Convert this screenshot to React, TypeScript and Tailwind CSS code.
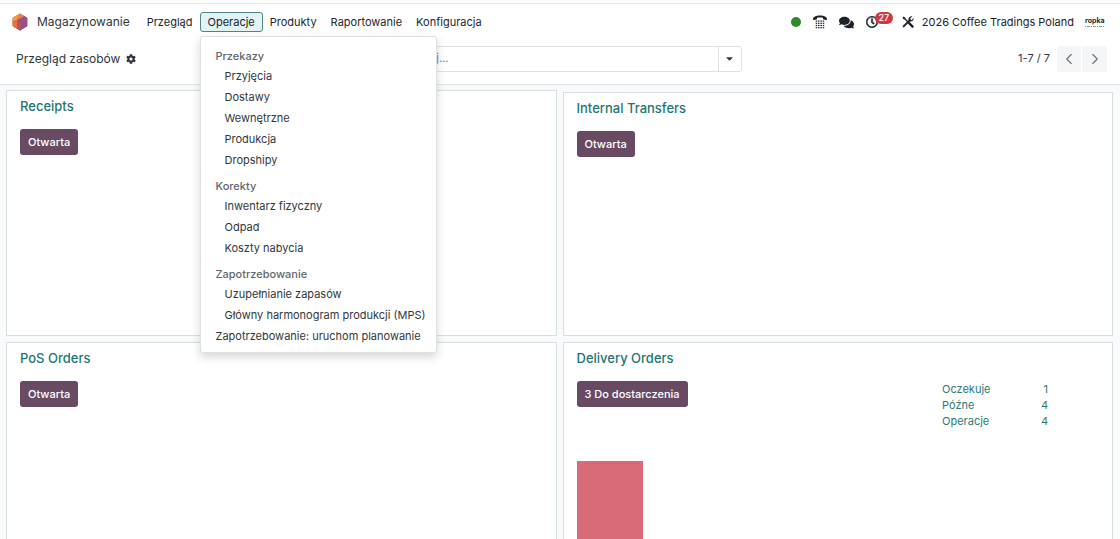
import React from "react";
import { FaCog, FaComments, FaRegClock, FaCaretDown, FaSearch } from "react-icons/fa";
import { ChevronLeft, ChevronRight } from "lucide-react";

type Section = { title: string; items: string[] };

const sections: Section[] = [
  { title: "Przekazy", items: ["Przyjęcia", "Dostawy", "Wewnętrzne", "Produkcja", "Dropshipy"] },
  { title: "Korekty", items: ["Inwentarz fizyczny", "Odpad", "Koszty nabycia"] },
  { title: "Zapotrzebowanie", items: ["Uzupełnianie zapasów", "Główny harmonogram produkcji (MPS)"] },
];

function AppLogo() {
  return (
    <svg viewBox="0 0 16 18" className="h-[18px] w-4" aria-hidden="true">
      <path d="M8 1 15 5v8l-7 4.200L1 13V5z" fill="#985184" stroke="#985184" strokeLinejoin="round" />
      <path d="M8 1 1 5v8l4 2.300V7.500L11.500 3z" fill="#f2a040" stroke="#f2a040" strokeLinejoin="round" />
      <path d="M5 6.500 12 3l3 2v8l-7 4.200-3-1.900z" fill="#985184" />
      <path d="M1 8v5l4 2.400V6.500z" fill="#e8703f" />
      <path d="M5 6.500 8 8.300v8.900l-3-1.800z" fill="#c4504f" />
      <path d="M8 1 12 3.200 5 7V5z" fill="#e97f3c" />
    </svg>
  );
}

function PhoneIcon() {
  return (
    <svg viewBox="0 0 14 14" className="h-[14px] w-[14px]" fill="currentColor" aria-hidden="true">
      <path d="M0 4.300C0 1.800 3.200.6 7 .6s7 1.200 7 3.700c0 .6-.3.8-.8.700l-2.500-.5c-.5-.1-.7-.4-.7-.8V2.800C8.200 2.300 5.800 2.300 4 2.800v.9c0 .4-.2.7-.7.800L.8 5C.3 5.100 0 4.900 0 4.300z" />
      {[5.500, 7.700, 9.900, 12.100].map((y) =>
        [2.700, 5, 7.400, 9.700].map((x) => <rect key={`${x}-${y}`} x={x} y={y} width="1.500" height="1.200" />),
      )}
    </svg>
  );
}

function ToolsIcon() {
  return (
    <svg viewBox="0 0 14 14" className="h-3 w-3" fill="none" stroke="currentColor" aria-hidden="true">
      <path d="M1.800 1.800 7 7" strokeWidth="1.400" />
      <path d="M.6 1.700 1.700.6l2.200 1.300.2 1-1.200 1.200-1-.2z" fill="currentColor" stroke="none" />
      <path d="m8.300 8.300 4 4" strokeWidth="2.800" strokeLinecap="round" />
      <path d="m1.900 12.100 7.300-7.300" strokeWidth="2.300" strokeLinecap="round" />
      <path d="M11.900.5 9.600 2.800l.3 1.500 1.400.3 2.300-2.300a3.600 3.600 0 0 1-4.700 4L7.700 5A3.600 3.600 0 0 1 11.900.5z" fill="currentColor" stroke="none" />
    </svg>
  );
}

function Card({ title, action, className = "", children }: { title: string; action: string; className?: string; children?: React.ReactNode }) {
  return (
    <section className={`flex flex-col border border-[#d5dfe0] bg-white px-[13px] pt-[7px] ${className}`}>
      <h2 className="text-[13px] leading-4 font-medium text-[#1f7572]">
        <a href="#">{title}</a>
      </h2>
      <div className="mt-[15px] flex items-start justify-between">
        <button className="h-[26px] rounded-[3px] bg-[#684a62] px-2 text-[11px] font-medium text-white">{action}</button>
        {title === "Delivery Orders" && (
          <table className="mr-[51px] w-[106px] text-[11px] leading-4 text-[#2b7a78]">
            <tbody>
              {[["Oczekuje", 1], ["Późne", 4], ["Operacje", 4]].map(([label, count]) => (
                <tr key={label}>
                  <td className="p-0"><a href="#">{label}</a></td>
                  <td className="p-0 text-right"><a href="#">{count}</a></td>
                </tr>
              ))}
            </tbody>
          </table>
        )}
      </div>
      {children}
    </section>
  );
}

export default function App() {
  return (
    <div className="flex h-screen flex-col overflow-hidden bg-white font-['Inter',sans-serif] text-[11px] text-[#32373d]">
      <div className="h-1 shrink-0 border-b border-[#e3e5e6] bg-[#fbfcfc]" />
      <header className="flex h-9 shrink-0 items-center justify-between pr-[14px] pl-3">
        <div className="flex items-center">
          <AppLogo />
          <a href="#" className="ml-[9px] text-[12px] leading-5">Magazynowanie</a>
          <nav className="ml-[10px] flex items-center text-[#22272c]">
            <button className="h-5 px-[7px]">Przegląd</button>
            <div className="relative">
              <button aria-expanded="true" className="h-5 rounded-[3px] border border-[#4f8583] bg-[#e2f3f3] px-[7px] text-[#17242b]">Operacje</button>
              <div className="absolute top-6 left-0 z-10 rounded-[3px] border border-[#dce1e3] bg-white pt-1 pb-[5px] whitespace-nowrap shadow-[0_4px_10px_rgba(0,0,0,0.17)]">
                {sections.map((s) => (
                  <div key={s.title}>
                    <div className="px-[15px] pt-[6px] leading-[19px] font-medium text-[#62676d]">{s.title}</div>
                    {s.items.map((item) => (
                      <a key={item} href="#" className="block pr-[10px] pl-6 leading-[21px] text-[#32373d]">{item}</a>
                    ))}
                  </div>
                ))}
                <a href="#" className="block pr-[10px] pl-[15px] leading-[21px] text-[#32373d]">Zapotrzebowanie: uruchom planowanie</a>
              </div>
            </div>
            <button className="h-5 px-[7px]">Produkty</button>
            <button className="h-5 px-[7px]">Raportowanie</button>
            <button className="h-5 px-[7px]">Konfiguracja</button>
          </nav>
        </div>
        <div className="flex items-center text-[#1d2229]">
          <span className="h-[10px] w-[10px] rounded-full bg-[#2f8a2b]" />
          <button aria-label="Telefon" className="ml-3"><PhoneIcon /></button>
          <button aria-label="Wiadomości" className="ml-3"><FaComments size={15} /></button>
          <button aria-label="Czynności" className="relative mr-6 ml-3">
            <FaRegClock size={12} strokeWidth={20} stroke="currentColor" />
            <span className="absolute -top-1 left-[9px] flex h-3 w-[18px] items-center justify-center rounded-full bg-[#cf3a41] text-[9px] font-medium text-white">27</span>
          </button>
          <button aria-label="Narzędzia"><ToolsIcon /></button>
          <button className="ml-2">2026 Coffee Tradings Poland</button>
          <a href="#" aria-label="Profil" className="ml-[10px]">
            <svg viewBox="0 0 22 12" className="h-3 w-[22px]">
              <text x="1" y="7" fontSize="7" fontWeight="700" fill="#24282c" fontFamily="Inter">ropka</text>
              <path d="M1 10.500h20" stroke="#999" strokeWidth="1" strokeDasharray="1 1 3 1" />
            </svg>
          </a>
        </div>
      </header>

      <div className="grid h-[45px] shrink-0 grid-cols-[1fr_360px_1fr] items-center border-b border-[#dfe4e5] pr-[13px] pb-[7px] pl-4">
        <div className="flex items-center gap-[6px]">
          <h1 className="text-[12px] leading-5">Przegląd zasobów</h1>
          <button aria-label="Ustawienia"><FaCog size={10} /></button>
        </div>
        <div className="flex h-[26px] items-center rounded-[3px] border border-[#dce1e3]">
          <FaSearch size={10} className="ml-2 shrink-0" />
          <input aria-label="Szukaj" placeholder="Szukaj..." className="min-w-0 flex-1 px-1 outline-none placeholder:text-[#777c82]" />
          <button aria-label="Filtry" className="flex h-full w-[23px] items-center justify-center border-l border-[#dce1e3]"><FaCaretDown size={11} /></button>
        </div>
        <div className="flex items-center justify-end">
          <span className="mr-[7px]">1-7 / 7</span>
          <button aria-label="Poprzednia" className="flex h-[26px] w-6 items-center justify-center rounded-l-[3px] bg-[#f3f5f6] text-[#6a7076]"><ChevronLeft size={18} strokeWidth={1.5} /></button>
          <button aria-label="Następna" className="ml-px flex h-[26px] w-[25px] items-center justify-center rounded-r-[3px] bg-[#f3f5f6] text-[#6a7076]"><ChevronRight size={18} strokeWidth={1.5} /></button>
        </div>
      </div>

      <main className="grid flex-1 auto-rows-[246px] grid-cols-2 gap-[6px] overflow-hidden bg-[#f9fafb] pt-[5px] pr-[7px] pl-[6px]">
        <Card title="Receipts" action="Otwarta" />
        <Card title="Internal Transfers" action="Otwarta" className="mt-[2px]" />
        <Card title="PoS Orders" action="Otwarta" />
        <Card title="Delivery Orders" action="3 Do dostarczenia">
          <svg className="mt-auto h-[126px] w-full" aria-label="Wykres dostaw">
            <rect x="0" y="0" width="66" height="126" fill="#d96a77" />
          </svg>
        </Card>
      </main>
    </div>
  );
}
